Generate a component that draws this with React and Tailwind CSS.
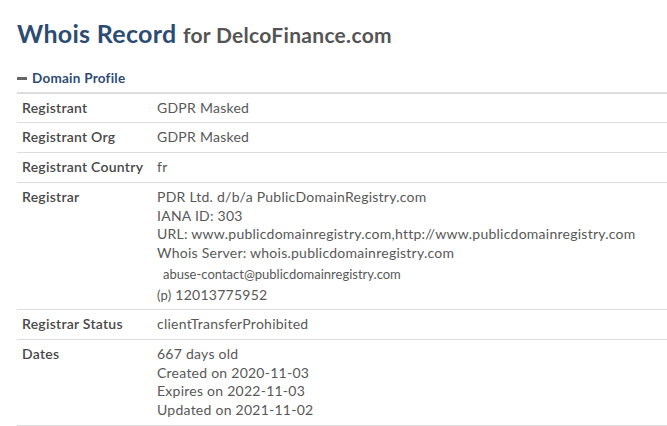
import React from 'react';

const rows = [
    { label: 'Registrant', values: ['GDPR Masked'] },
    { label: 'Registrant Org', values: ['GDPR Masked'] },
    { label: 'Registrant Country', values: ['fr'] },
];

const Row = ({ label, children }) => (
    <div className="flex border-b border-[#dddddd] py-[5px]">
        <div className="w-[140px] shrink-0 pl-[5px] font-semibold text-[#484848]">{label}</div>
        <div className="flex-1 text-[#585858]">{children}</div>
    </div>
);

const App = () => {
    return (
        <div className="min-h-[426px] bg-white pl-[17px] pt-[19px] font-['Lato',sans-serif] text-[14px] tracking-[0.25px] leading-[18.7px] overflow-hidden">
            {/* Title */}
            <h1 className="whitespace-nowrap text-[25px] leading-[29px] font-bold tracking-[0.3px] text-[#2d4c73]">
                Whois Record <span className="text-[21px] text-[#555]">for DelcoFinance.com</span>
            </h1>

            {/* Section header */}
            <div className="mt-[20px] flex items-center gap-[5px] text-[13.5px] font-bold text-[#2d4c73]">
                <span className="inline-block h-[3px] w-[10px] bg-[#666]" />
                <span>Domain Profile</span>
            </div>

            {/* Table */}
            <div className="mt-[4px] w-[700px] border-t-[2px] border-[#dddddd]">
                {rows.map((r) => (
                    <Row key={r.label} label={r.label}>{r.values[0]}</Row>
                ))}
                <Row label="Registrar">
                    <div>PDR Ltd. d/b/a PublicDomainRegistry.com</div>
                    <div>IANA ID: 303</div>
                    <div className="whitespace-nowrap">URL: www.publicdomainregistry.com,http://www.publicdomainregistry.com</div>
                    <div>Whois Server: whois.publicdomainregistry.com</div>
                    <div className="pt-[2px] pl-[6px] text-[13px] tracking-[0px] leading-[19px]">abuse-contact@publicdomainregistry.com</div>
                    <div className="pt-[2px]"><span className="text-[13px]">(p)</span> 12013775952</div>
                </Row>
                <Row label="Registrar Status">clientTransferProhibited</Row>
                <Row label="Dates">
                    <div>667 days old</div>
                    <div>Created on 2020-11-03</div>
                    <div>Expires on 2022-11-03</div>
                    <div>Updated on 2021-11-02</div>
                </Row>
            </div>
        </div>
    );
};

export default App;
